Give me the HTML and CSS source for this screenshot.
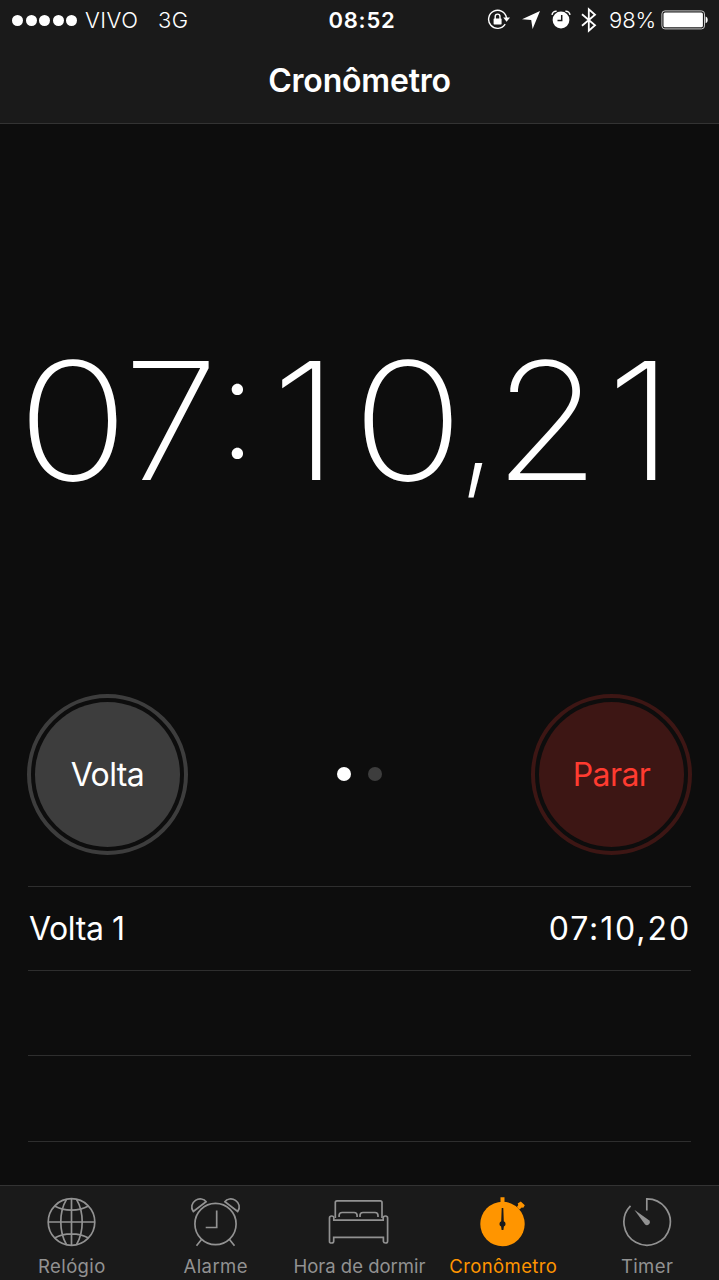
FILE: index.html
```html
<!DOCTYPE html>
<html lang="pt-BR">
<head>
<meta charset="utf-8">
<title>Cronômetro</title>
<link rel="stylesheet" href="styles.css">
</head>
<body>
<div class="app">
  <header class="header">
    <div class="status">
      <div class="status-left">
        <span class="signal"><i></i><i></i><i></i><i></i><i></i></span>
        <span class="carrier">VIVO</span>
        <span class="network">3G</span>
      </div>
      <span class="clock">08:52</span>
      <div class="status-right">
        <svg class="ic-lock" width="24" height="22" viewBox="0 0 24 22" fill="none" stroke="#fff" stroke-width="1.4">
          <path d="M18.2 15.2A9 9 0 1 1 19.5 9"/>
          <path d="M16.2 8.5h6.8l-3.4 4.3z" fill="#fff" stroke="none"/>
          <rect x="6.6" y="9.4" width="8" height="6" rx=".6" fill="#fff" stroke="none"/>
          <path d="M8.2 10V7.5a2.400 2.400 0 0 1 4.800 0V10"/>
        </svg>
        <svg class="ic-loc" width="18" height="18" viewBox="0 0 18 18"><path d="M18 0L10.600 18L9.200 8.900L0 8.200z" fill="#fff"/></svg>
        <svg class="ic-alarm" width="20" height="20" viewBox="0 0 20 20">
          <circle cx="10" cy="10" r="8.400" fill="#fff"/>
          <path d="M1 4.800A4.200 4.200 0 0 1 5.600 1.200M14.400 1.200a4.200 4.200 0 0 1 4.600 3.600" fill="none" stroke="#fff" stroke-width="1.500"/>
          <path d="M10.700 5v5.600H6.500" fill="none" stroke="#1a1a1a" stroke-width="1.500"/>
        </svg>
        <svg class="ic-bt" width="16" height="26" viewBox="0 0 16 26"><path d="M1 7.300l13 11-6.200 5.400V2.300L14 7.800 1 18.800" fill="none" stroke="#fff" stroke-width="1.800"/></svg>
        <span class="percent">98%</span>
        <svg class="ic-batt" width="48" height="20" viewBox="0 0 48 20">
          <rect x=".9" y=".9" width="42.600" height="18" rx="3" fill="none" stroke="#c8c8c8" stroke-width="1"/>
          <rect x="2.500" y="2.500" width="39.400" height="14.800" rx="1.600" fill="#fff"/>
          <path d="M44.600 6.600c2.800.6 2.800 6 0 6.600z" fill="#fff"/>
        </svg>
      </div>
    </div>
    <h1 class="title">Cronômetro</h1>
  </header>

  <main class="main">
    <div class="time"><span class="zero">0</span><span class="wide">7</span><span class="sep colon">:</span><span class="one">1</span><span class="zero">0</span><span class="sep comma">,</span><span class="wide">2</span><span class="one">1</span></div>
    <div class="controls">
      <button class="round lap"><span class="disc">Volta</span></button>
      <div class="pager"><i class="on"></i><i></i></div>
      <button class="round stop"><span class="disc">Parar</span></button>
    </div>
    <ul class="laps">
      <li><span class="lap-name">Volta 1</span><span class="lap-time">07:10,20</span></li>
      <li></li>
      <li></li>
      <li></li>
    </ul>
  </main>

  <nav class="tabs">
    <a class="tab">
      <svg width="64" height="52" viewBox="0 0 64 52" fill="none" stroke="currentColor" stroke-width="1.7">
        <circle cx="32" cy="26" r="23.3"/>
        <path d="M32 2.700v46.600M8.700 26h46.600M27 3.400C19.400 16 19.400 36 27 48.600M37 3.400c7.600 12.600 7.600 32.600 0 45.200M15 10c10 5.500 24 5.500 34 0M15 42c10-5.500 24-5.500 34 0"/>
      </svg>
      <span>Relógio</span>
    </a>
    <a class="tab">
      <svg width="64" height="52" viewBox="0 0 64 52" fill="none" stroke="currentColor" stroke-width="1.7">
        <circle cx="32" cy="28" r="20.600"/>
        <path d="M33.200 14.500v17h-11"/>
        <path d="M18 43.500l-5 6.300M46 43.500l5 6.300"/>
        <path d="M9.800 15.500C6.800 11.600 8.400 6.800 12 4.400c3.600-2.400 8.600-1.800 10.600 1.400zM54.200 15.500c3-3.900 1.400-8.700-2.200-11.100-3.600-2.400-8.600-1.800-10.600 1.400z"/>
      </svg>
      <span>Alarme</span>
    </a>
    <a class="tab">
      <svg width="64" height="52" viewBox="0 0 64 52" fill="none" stroke="currentColor" stroke-width="1.7">
        <path d="M8.800 22V6.500q0-1.700 1.700-1.700h43.300q1.700 0 1.700 1.700V22"/>
        <path d="M12.600 21v-1.500q0-3 3-3h12q3 0 3 3V21M33.500 21v-1.500q0-3 3-3h12q3 0 3 3V21"/>
        <path d="M7.300 24.200h49.400V22q0-2 2.200-2t2.200 2v23.300q0 1.700-2 1.700t-2.200-1.700v-4H7.200v4q0 1.700-2.200 1.700t-2-1.700V22q0-2 2.200-2t2.100 2z"/>
      </svg>
      <span class="long">Hora de dormir</span>
    </a>
    <a class="tab active">
      <svg width="64" height="52" viewBox="0 0 64 52">
        <circle cx="32" cy="28" r="22.200" fill="currentColor"/>
        <path d="M30 1.200h4V7h-4zM47.800 9l-.6-1.500 3.100-1.900 4 3.600-1.500 2.600-1.600-.3-2.200 2-2.600-2.600z" fill="currentColor"/>
        <path d="M31.200 12h1.600l.5 13.300a2.900 2.900 0 0 1 .1 5.300l-.5 3.400h-1.800l-.5-3.400a2.900 2.900 0 0 1 .1-5.300z" fill="#1a1a1a"/>
      </svg>
      <span>Cronômetro</span>
    </a>
    <a class="tab">
      <svg width="64" height="52" viewBox="0 0 64 52" fill="none" stroke="currentColor" stroke-width="1.7">
        <path d="M32.300 14.500V2.800A23.200 23.200 0 1 1 16 9.800"/>
        <path d="M19.800 13.800l14.700 10.400a2.900 2.900 0 0 1-4.100 4.100z" fill="currentColor" stroke="none"/>
      </svg>
      <span>Timer</span>
    </a>
  </nav>
</div>
</body>
</html>
```
FILE: styles.css
```css
* { box-sizing: border-box; }
body {
  margin: 0;
  background: #0d0d0d;
  color: #fff;
  font-family: Inter, "Liberation Sans", sans-serif;
}
.app { width: 719px; height: 1280px; display: flex; flex-direction: column; overflow: hidden; }

.header { flex: none; height: 124px; background: #1a1a1a; border-bottom: 1px solid #333; }
.status {
  height: 40px;
  display: grid;
  grid-template-columns: 300px 124px 1fr;
  align-items: center;
  font-size: 22px;
  line-height: 40px;
}
.status-left, .status-right { display: flex; align-items: center; height: 40px; }
.status-left { padding-left: 12px; }
.signal { display: flex; gap: 2.5px; width: 73px; }
.signal i { width: 11px; height: 11px; border-radius: 50%; background: #fff; }
.carrier { width: 73px; letter-spacing: 0.5px; font-weight: 350; }
.network { font-weight: 350; letter-spacing: 0.3px; }
.clock { text-align: center; font-weight: 600; font-size: 22px; letter-spacing: 0.8px; }
.status-right { padding-left: 63px; }
.ic-lock { margin-right: 11px; }
.ic-loc { margin-right: 11px; }
.ic-alarm { margin-right: 10px; }
.ic-bt { margin-right: 12px; }
.status-right svg { flex: none; }
.percent { width: 52px; flex: none; font-weight: 350; letter-spacing: -0.1px; }
.title { margin: 0; height: 83px; line-height: 82px; text-align: center; font-size: 32px; font-weight: 600; letter-spacing: -0.2px; }

.main { flex: 1; min-height: 0; display: flex; flex-direction: column; }
.time {
  flex: none;
  height: 570px;
  display: flex;
  padding: 197px 0 0 24px;
  font-size: 164px;
  line-height: 200px;
  font-weight: 200;
}
.time span { width: 98px; display: flex; justify-content: center; }
.time .zero { transform: scaleX(1.13); }
.time .wide { transform: scaleX(1.05); }
.time .one { transform: translateX(-5px) scaleX(1.09); }
.time .sep { width: 41px; }
.time .colon { font-size: 144px; transform: translate(-3px, -15px); }
.time .comma { font-size: 144px; transform: translateY(2px); }
.controls { flex: none; display: flex; justify-content: space-between; align-items: center; padding: 0 27px; height: 161px; }
.round {
  width: 161px; height: 161px; padding: 4px;
  border: 4px solid; border-radius: 50%;
  background: none; font: 400 32px Inter, sans-serif;
  letter-spacing: -0.6px;
}
.disc { width: 145px; height: 145px; border-radius: 50%; display: flex; align-items: center; justify-content: center; }
.lap { border-color: #3d3d3d; color: #fff; }
.lap .disc { background: #3d3d3d; }
.stop { border-color: #3d1614; color: #ff3b30; }
.stop .disc { background: #3d1614; }
.pager { display: flex; gap: 17px; margin-bottom: 1px; }
.pager i { width: 14px; height: 14px; border-radius: 50%; background: #3d3d3d; }
.pager .on { background: #fff; }
.laps { list-style: none; margin: 31px 28px 0; padding: 0; flex: 1; min-height: 0; overflow: hidden; }
.laps li {
  height: 85px;
  border-top: 1px solid #2e2e2e;
  display: flex; justify-content: space-between; align-items: center;
  padding: 0 1px;
  font-size: 32px;
}
.laps li:nth-child(1) { height: 84px; }
.laps li:nth-child(3) { height: 86px; }
.lap-name { letter-spacing: -0.4px; }
.lap-time { letter-spacing: 1.9px; margin-right: -1px; }

.tabs { flex: none; height: 95px; background: #1a1a1a; border-top: 1px solid #333; display: grid; grid-template-columns: repeat(5, 1fr); }
.tab { display: flex; flex-direction: column; align-items: center; color: #929292; font-size: 18.5px; letter-spacing: 0.4px; padding-top: 10px; white-space: nowrap; }
.tab svg { flex: none; transform: translateX(-0.5px); }
.tab span { line-height: 24px; margin-top: 6px; }
.tab .long { letter-spacing: 0; }
.active { color: #ff9500; }
```
